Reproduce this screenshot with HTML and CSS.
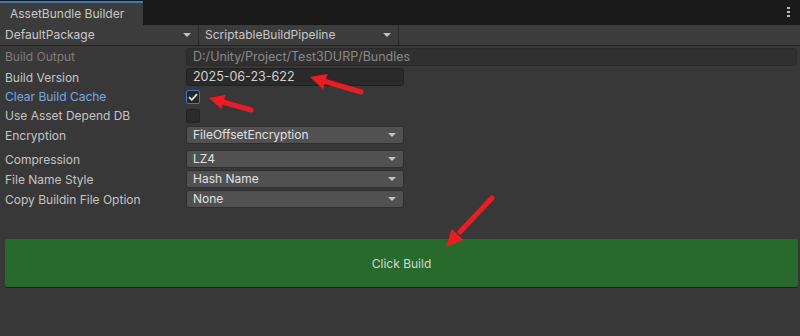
FILE: index.html
```html
<!DOCTYPE html>
<html lang="en">
<head>
  <meta charset="UTF-8">
  <title>AssetBundle Builder</title>
  <link rel="stylesheet" href="styles.css">
</head>
<body>

  <div class="titlebar">
    <div class="tab">AssetBundle Builder</div>
    <div class="menu-dots"><span></span><span></span><span></span></div>
  </div>

  <div class="toolbar">
    <div class="tool-popup">DefaultPackage<i class="caret"></i></div>
    <div class="tool-popup">ScriptableBuildPipeline<i class="caret"></i></div>
  </div>

  <div class="content">
    <div class="row row-output">
      <label class="label disabled">Build Output</label>
      <div class="field wide disabled">D:/Unity/Project/Test3DURP/Bundles</div>
    </div>
    <div class="row">
      <label class="label">Build Version</label>
      <div class="field">2025-06-23-622</div>
    </div>
    <div class="row row-check">
      <label class="label focused">Clear Build Cache</label>
      <div class="checkbox checked">
        <svg width="10" height="8" viewBox="0 0 10 8"><path d="M1 4.2 L3.8 6.8 L9 1.2" fill="none" stroke="#e4e4e4" stroke-width="1.8"/></svg>
      </div>
    </div>
    <div class="row row-check">
      <label class="label">Use Asset Depend DB</label>
      <div class="checkbox"></div>
    </div>
    <div class="row">
      <label class="label">Encryption</label>
      <div class="popup">FileOffsetEncryption<i class="caret"></i></div>
    </div>
    <div class="row spaced">
      <label class="label">Compression</label>
      <div class="popup">LZ4<i class="caret"></i></div>
    </div>
    <div class="row">
      <label class="label">File Name Style</label>
      <div class="popup">Hash Name<i class="caret"></i></div>
    </div>
    <div class="row">
      <label class="label">Copy Buildin File Option</label>
      <div class="popup">None<i class="caret"></i></div>
    </div>

    <button class="build-button">Click Build</button>
  </div>

  <!-- annotation arrows drawn over the screenshot -->
  <svg class="arrows" width="800" height="336" viewBox="0 0 800 336">
    <g stroke="#ec1c24" stroke-width="5" stroke-linecap="round" fill="#ec1c24">
      <line x1="361" y1="92" x2="322" y2="80.5"/>
      <line x1="251" y1="110" x2="221" y2="101.5"/>
      <line x1="492" y1="198" x2="460" y2="232"/>
    </g>
    <g fill="#ec1c24">
      <polygon points="310,77 327.6,73.9 323,89.3"/>
      <polygon points="209,98 225.5,94.8 221.5,109.2"/>
      <polygon points="446,247 463.4,240.1 451.8,229.1"/>
    </g>
  </svg>

</body>
</html>
```

FILE: styles.css
```css
body {
  margin: 0;
  width: 800px;
  height: 336px;
  background-color: #383838;
  font-family: Inter, "Noto Sans", sans-serif;
  font-size: 12px;
  color: #c4c4c4;
  position: relative;
  overflow: hidden;
}
.titlebar {
  height: 25px;
  background-color: #191919;
  display: flex;
  align-items: flex-end;
  justify-content: space-between;
}
.tab {
  width: 133px;
  height: 22px;
  padding-left: 10px;
  border-top: 2px solid #3a79bb;
  background-color: #3c3c3c;
  line-height: 21px;
  color: #c8c8c8;
}
.menu-dots {
  align-self: flex-start;
  display: flex;
  flex-direction: column;
  gap: 2px;
  padding: 7px 10px 0 0;
}
.menu-dots span {
  width: 3px;
  height: 2px;
  background-color: #bdbdbd;
}
.toolbar {
  height: 20px;
  display: flex;
  background-color: #3c3c3c;
  border-bottom: 1px solid #232323;
}
.tool-popup {
  width: 193px;
  padding-left: 5px;
  line-height: 20px;
  color: #c8c8c8;
  border-right: 1px solid #2a2a2a;
  margin-right: 1px;
  position: relative;
}
.caret {
  position: absolute;
  right: 7px;
  top: 8px;
  border-left: 4px solid transparent;
  border-right: 4px solid transparent;
  border-top: 4px solid #c4c4c4;
}
.content {
  padding: 1px 2px 0 5px;
}
.row {
  display: flex;
  align-items: center;
  height: 18px;
  margin-top: 2px;
}
.row-output {
  height: 19px;
  margin-top: 0;
}
.row-check {
  height: 17px;
}
.spaced {
  margin-top: 6px;
}
.label {
  width: 181px;
  flex-shrink: 0;
  color: #c4c4c4;
}
.label.disabled {
  color: #7d7d7d;
}
.label.focused {
  color: #7aa7e4;
}
.field {
  width: 210px;
  height: 16px;
  padding-left: 6px;
  line-height: 16px;
  background-color: #2a2a2a;
  border: 1px solid #212121;
  border-radius: 3px;
  color: #d2d2d2;
  font-size: 12.5px;
}
.field.wide {
  width: 603px;
  background-color: #303030;
  border-color: #2b2b2b;
}
.field.disabled {
  color: #8a8a8a;
}
.checkbox {
  width: 12px;
  height: 12px;
  margin-left: 0;
  background-color: #2a2a2a;
  border: 1px solid #232323;
  border-radius: 2px;
  display: flex;
  align-items: center;
  justify-content: center;
}
.checkbox.checked {
  border-color: #3a79bb;
  background-color: #262626;
}
.popup {
  width: 210px;
  height: 16px;
  padding-left: 6px;
  line-height: 16px;
  background-color: #515151;
  border: 1px solid #2e2e2e;
  border-radius: 3px;
  color: #e0e0e0;
  position: relative;
}
.popup .caret {
  top: 6px;
}
.build-button {
  display: block;
  width: 793px;
  height: 48px;
  margin-top: 31px;
  padding: 0;
  background-color: #286a2b;
  border: none;
  border-radius: 2px;
  box-shadow: 0 1px 0 #1f1f1f;
  color: #d6d6d6;
  font-family: Inter, "Noto Sans", sans-serif;
  font-size: 12px;
}
.arrows {
  position: absolute;
  left: 0;
  top: 0;
  pointer-events: none;
}
```
